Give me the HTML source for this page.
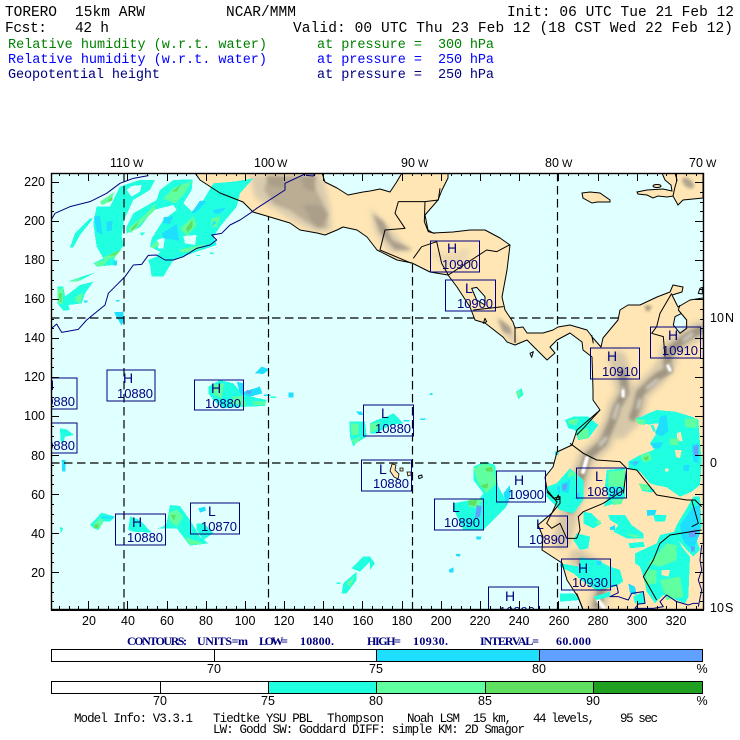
<!DOCTYPE html>
<html><head><meta charset="utf-8"><style>
html,body{margin:0;padding:0;background:#fff;width:740px;height:740px;overflow:hidden}
svg{display:block}
text{font-family:"Liberation Mono",monospace;font-size:14.5px;fill:#000;white-space:pre}
.s{font-family:"Liberation Sans",sans-serif;font-size:12.5px}
.n{font-family:"Liberation Sans",sans-serif;font-size:13px;fill:#00007f}
.b{font-family:"Liberation Serif",serif;font-weight:bold;font-size:12px;fill:#00007f}
.t{fill:#20ffdf}.g{fill:#60ff9f}.m{fill:#60e060}.d{fill:#1fa020}.c{fill:#1fdfff}.p{fill:#60a0ff}
.rain{shape-rendering:crispEdges}
.ln{fill:none;stroke-linejoin:round;vector-effect:non-scaling-stroke}
</style></head><body>
<svg width="740" height="740" viewBox="0 0 740 740" xmlns="http://www.w3.org/2000/svg">
<defs>
<clipPath id="plot"><rect x="51" y="173" width="652" height="436"/></clipPath>
<clipPath id="land"><path d="M195,173 200,180 220,193 243,202 253,212 270,217 290,223 300,230 317,233 325,235 337,230 343,227 357,230 367,237 377,250 397,260 412,263 430,272 448,275 457,287 470,307 475,320 485,323 503,337 507,342 515,345 527,340 537,350 547,360 555,353 550,347 557,340 570,333 582,342 583,350 592,357 593,390 593,400 600,410 577,430 572,445 557,452 553,467 545,477 547,490 557,502 552,513 538,525 543,537 542,550 562,563 567,580 578,597 583,610 703,610 703,298 690,300 678,307 672,295 682,292 683,287 673,285 670,292 657,297 640,305 628,305 620,310 618,320 603,338 601,347 593,338 587,330 570,325 558,327 553,330 543,333 527,333 523,327 515,328 513,322 505,310 502,297 507,270 510,245 500,238 485,230 470,230 453,232 433,233 428,230 425,215 438,200 442,190 448,178 448,173 402,173 396,183 390,192 380,189 370,191 363,192 348,195 337,188 325,182 322,173Z"/></clipPath>
<clipPath id="ocean"><path clip-rule="evenodd" d="M51,173H703V609H51Z M195,173 200,180 220,193 243,202 253,212 270,217 290,223 300,230 317,233 325,235 337,230 343,227 357,230 367,237 377,250 397,260 412,263 430,272 448,275 457,287 470,307 475,320 485,323 503,337 507,342 515,345 527,340 537,350 547,360 555,353 550,347 557,340 570,333 582,342 583,350 592,357 593,390 593,400 600,410 577,430 572,445 557,452 553,467 545,477 547,490 557,502 552,513 538,525 543,537 542,550 562,563 567,580 578,597 583,609 703,609 703,298 690,300 678,307 672,295 682,292 683,287 673,285 670,292 657,297 640,305 628,305 620,310 618,320 603,338 601,347 593,338 587,330 570,325 558,327 553,330 543,333 527,333 523,327 515,328 513,322 505,310 502,297 507,270 510,245 500,238 485,230 470,230 453,232 433,233 428,230 425,215 438,200 442,190 448,178 448,173 402,173 396,183 390,192 380,189 370,191 363,192 348,195 337,188 325,182 322,173Z"/></clipPath>
<filter id="bl" x="-30%" y="-30%" width="160%" height="160%"><feGaussianBlur stdDeviation="3"/></filter>
<filter id="bl2" x="-30%" y="-30%" width="160%" height="160%"><feGaussianBlur stdDeviation="1.5"/></filter>
<filter id="bl3" x="-30%" y="-30%" width="160%" height="160%"><feGaussianBlur stdDeviation=".8"/></filter>
</defs>

<!-- header -->
<text x="5" y="16" textLength="52" lengthAdjust="spacing">TORERO</text>
<text x="75" y="16" textLength="70" lengthAdjust="spacing">15km ARW</text>
<text x="226" y="16" textLength="70" lengthAdjust="spacing">NCAR/MMM</text>
<text x="507" y="16" textLength="227" lengthAdjust="spacing">Init: 06 UTC Tue 21 Feb 12</text>
<text x="5" y="32" textLength="42" lengthAdjust="spacing">Fcst:</text>
<text x="75" y="32" textLength="34" lengthAdjust="spacing">42 h</text>
<text x="293" y="32" textLength="440" lengthAdjust="spacing">Valid: 00 UTC Thu 23 Feb 12 (18 CST Wed 22 Feb 12)</text>
<text x="8" y="48" textLength="259" lengthAdjust="spacing" style="font-size:13.5px;fill:#008000">Relative humidity (w.r.t. water)</text>
<text x="317" y="48" textLength="105" lengthAdjust="spacing" style="font-size:13.5px;fill:#008000">at pressure =</text>
<text x="438" y="48" textLength="56" lengthAdjust="spacing" style="font-size:13.5px;fill:#008000">300 hPa</text>
<text x="8" y="63" textLength="259" lengthAdjust="spacing" style="font-size:13.5px;fill:#0000ff">Relative humidity (w.r.t. water)</text>
<text x="317" y="63" textLength="105" lengthAdjust="spacing" style="font-size:13.5px;fill:#0000ff">at pressure =</text>
<text x="438" y="63" textLength="56" lengthAdjust="spacing" style="font-size:13.5px;fill:#0000ff">250 hPa</text>
<text x="8" y="78" textLength="152" lengthAdjust="spacing" style="font-size:13.5px;fill:#00007f">Geopotential height</text>
<text x="317" y="78" textLength="105" lengthAdjust="spacing" style="font-size:13.5px;fill:#00007f">at pressure =</text>
<text x="438" y="78" textLength="56" lengthAdjust="spacing" style="font-size:13.5px;fill:#00007f">250 hPa</text>

<!-- plot -->
<rect x="51" y="173" width="652" height="436" fill="#e0ffff"/>
<g clip-path="url(#plot)">
<path d="M195,173 200,180 220,193 243,202 253,212 270,217 290,223 300,230 317,233 325,235 337,230 343,227 357,230 367,237 377,250 397,260 412,263 430,272 448,275 457,287 470,307 475,320 485,323 503,337 507,342 515,345 527,340 537,350 547,360 555,353 550,347 557,340 570,333 582,342 583,350 592,357 593,390 593,400 600,410 577,430 572,445 557,452 553,467 545,477 547,490 557,502 552,513 538,525 543,537 542,550 562,563 567,580 578,597 583,610 703,610 703,298 690,300 678,307 672,295 682,292 683,287 673,285 670,292 657,297 640,305 628,305 620,310 618,320 603,338 601,347 593,338 587,330 570,325 558,327 553,330 543,333 527,333 523,327 515,328 513,322 505,310 502,297 507,270 510,245 500,238 485,230 470,230 453,232 433,233 428,230 425,215 438,200 442,190 448,178 448,173 402,173 396,183 390,192 380,189 370,191 363,192 348,195 337,188 325,182 322,173Z" fill="#ffe6b4"/>

<!-- islands -->
<path d="M582,193 590,192 600,193 610,200 610,202 597,202 592,203 583,198Z" fill="#ffe6b4" stroke="#000" stroke-width="1"/>
<path d="M662,173 665,180 671,185 672,191 663,189 647,190 637,192 638,194 647,195 653,198 658,196 667,197 673,196 678,205 683,200 703,198 703,173Z" fill="#ffe6b4" stroke="#000" stroke-width="1"/>
<ellipse cx="657" cy="186" rx="4" ry="1.500" fill="#ffe6b4" stroke="#000"/>
<path d="M675,173 677,180 675,187 673,196" fill="none" stroke="#000"/>
<ellipse cx="688" cy="183" rx="7" ry="4" transform="rotate(40 688 183)" fill="#b0a48e" filter="url(#bl2)"/>
<!-- lakes -->
<path d="M680,313 686,319 685,330 678,333 673,325 675,316Z" fill="#e0ffff"/>
<path d="M472,288 477,287 485,297 485,305 477,300Z" fill="#e0ffff"/>

<!-- terrain -->
<g clip-path="url(#land)">
<g filter="url(#bl)" fill="#d9cbae">
<path d="M250,175 322,175 330,205 332,230 315,232 296,222 276,210 255,198Z"/>
<path d="M370,208 384,222 403,243 413,250 390,252 375,232Z"/>
<path d="M430,252 450,254 470,246 468,262 445,266Z" opacity=".5"/>
<path d="M495,316 510,328 520,345 508,340Z"/>
<path d="M684,173 703,173 703,186 690,192Z" opacity=".6"/>
</g>
<g filter="url(#bl2)" fill="#ac9f89">
<path d="M268,176 314,176 316,190 328,213 326,228 317,228 304,220 290,210 274,204 264,190Z" opacity=".7"/>
<path d="M266,176 285,176 284,188 270,186Z"/>
<path d="M300,176 316,176 314,192 304,188Z"/>
<path d="M303,205 320,205 328,215 320,228 312,222Z"/>
<path d="M373,214 384,222 392,240 405,246 412,250 395,250 380,232Z" />
<path d="M498,318 510,327 512,334 503,332Z"/>
</g>
<!-- Andes as blurred bands -->
<g fill="none" stroke-linejoin="round" stroke-linecap="round">
<g filter="url(#bl)" stroke="#d2c4a8" stroke-width="18" opacity=".9">
<path d="M700,330 687,337 670,350 667,363 657,377 640,393 637,407 633,417 620,430"/>
<path d="M618,360 623,383 625,393 617,407 613,420 603,443 587,457 582,470 577,490 570,510 562,540"/>
<path d="M578,558 593,567 603,583 597,608"/>
</g>
<g filter="url(#bl2)" stroke="#a09682" stroke-width="8">
<path d="M700,330 687,337 670,350 667,363 669,370 657,377 640,393 637,407 633,417"/>
<path d="M622,372 624,383 625,393 617,407 613,420 603,443 587,457 583,470 577,490 570,510"/>
<path d="M582,562 593,570 603,585 597,605"/>
</g>
<g filter="url(#bl2)" stroke="#d8d5cc" stroke-width="3">
<path d="M692,334 684,340 M668,365 670,371 M657,380 647,388 M640,400 638,408"/>
<path d="M623,388 624,396 M618,405 614,418 M606,438 600,445"/>
</g>
<g stroke="#fff" stroke-width="3" filter="url(#bl3)">
<path d="M668,366 670,370"/><path d="M623,391 623,396"/><path d="M587,458 583,472" stroke-width="4"/><path d="M598,600 604,608" stroke-width="4"/>
</g>
</g>
<path d="M644,306 652,306 648,312Z" fill="#8f8672" filter="url(#bl2)"/>
</g>

<!-- rain: ocean -->
<g class="rain">
<g transform="translate(0,150) scale(.33333)">
<path class="t" fill-rule="evenodd" d="M330,170 360,110 420,90 465,90 450,120 400,150 372,210 365,260 372,285 345,320 340,345 290,350 280,340 310,325 290,290 280,220 290,170ZM380,120 395,108 425,105 420,125 395,140Z"/>
<path class="t" d="M210,292 225,250 270,205 280,205 240,255 220,292Z M203,395 260,375 285,368 240,392Z M172,410 190,410 195,440 240,405 280,395 255,430 245,460 205,465 210,480 190,482 172,460Z"/>
<path class="t" fill-rule="evenodd" d="M380,230 400,190 470,150 480,120 520,90 578,88 575,120 550,160 575,185 610,150 640,100 700,95 760,85 720,130 710,170 660,230 640,260 650,285 590,305 520,330 490,380 455,380 450,345 445,330 470,320 480,305 450,290 455,265 490,210 530,180 520,165 460,180 420,232 380,250ZM550,258 590,255 585,285 555,280ZM470,270 495,262 490,295 475,295Z"/>
<path class="g" d="M300,155 345,125 330,155 305,165 Z M385,235 440,190 465,160 465,180 420,225 390,250Z M490,145 520,115 575,92 555,130 525,160Z M540,235 580,200 590,225 560,258Z M310,322 365,298 345,322 315,332Z M450,290 472,272 478,285 460,295Z M535,300 615,282 600,298 550,308Z M172,418 190,414 188,462 176,462Z M227,440 248,428 243,458 227,456Z M285,338 325,328 310,348 288,348Z M635,205 662,198 650,232 635,230Z M207,395 248,382 233,394Z"/>
<path class="m" d="M325,150 338,138 338,150 328,156Z M395,235 415,215 410,228 395,243Z M515,125 545,102 530,125Z M558,235 578,208 578,232 562,248Z M325,318 360,300 345,316Z M176,432 186,428 184,458 179,454Z"/>
<path class="c" d="M282,200 300,198 308,255 290,245Z M320,215 338,212 335,243 320,243Z M490,202 520,198 510,222 490,220Z M485,250 530,222 538,272 490,265Z M600,152 620,155 585,190 575,188Z M640,180 680,172 660,190 640,190Z M640,215 650,215 635,232Z M342,487 370,485 372,510 365,527 355,510Z M765,670 785,650 808,658 790,672Z M340,332 352,332 350,347 340,347Z M252,452 262,452 262,457 252,457Z M348,450 358,450 358,455 348,455Z"/>
<path class="t" d="M590,315 600,315 600,318 590,318Z M630,308 640,308 640,312 630,312Z M420,248 435,248 425,258Z"/>
</g>

<g transform="translate(0,380) scale(.33333)">
<path class="t" d="M625,20 660,0 700,10 730,45 800,60 795,78 740,80 670,85 640,60 625,40Z"/>
<path class="g" d="M638,15 672,10 665,55 640,42Z M700,50 730,48 740,78 695,70Z M758,65 798,65 795,75 762,75Z"/>
<path class="c" d="M710,5 730,10 732,35 780,20 787,40 750,50 720,40Z M865,38 880,38 880,52 865,52Z M792,44 812,44 812,48 792,48Z"/>
<path class="p" d="M740,30 755,33 750,43 740,40Z"/>
<path class="t" d="M812,50 828,50 828,54 812,54Z M180,145 200,148 222,165 195,170 190,190 182,185Z M180,440 190,445 182,460Z M270,435 305,398 345,410 330,425 310,425 295,450 280,445Z M390,410 420,420 455,458 400,455 385,450Z M490,440 500,430 510,375 540,378 570,420 600,470 625,490 570,497 530,445 472,445Z M590,430 610,430 640,460 610,480 590,450Z M1048,125 1095,125 1100,170 1075,185 1060,200 1050,170Z M1055,565 1090,530 1110,530 1110,545 1080,575Z M1025,640 1030,610 1070,575 1070,600 1040,640Z M1010,608 1022,608 1022,612 1010,612Z"/>
<path class="c" d="M185,240 197,240 197,275 187,275Z M595,385 615,380 618,392 600,398Z M305,410 340,410 340,415 305,415Z M1068,95 1085,95 1090,105 1078,105Z"/>
<path class="g" d="M280,435 300,415 310,420 300,445 285,447Z M505,400 530,388 550,410 530,440 510,425Z M555,470 580,480 612,490 570,495Z M1055,180 1085,168 1065,195Z M1040,610 1065,588 1050,622Z M1052,130 1075,130 1075,165 1055,165Z"/>
<path class="m" d="M282,435 295,430 295,443 285,445Z M512,405 528,405 522,422Z"/>
</g>

<g transform="translate(370,380) scale(.33333)">
<path class="t" d="M310,260 345,245 375,255 385,320 410,365 410,380 380,410 340,450 280,450 250,385 250,370 330,355 340,340 310,300Z M0,530 15,550 0,570Z M0,130 20,120 50,110 70,100 100,130 60,135 20,160 0,160Z M438,35 455,25 460,45 445,57Z"/>
<path class="g" d="M310,265 345,250 370,260 380,310 350,340 325,310Z M295,360 340,355 325,385 295,380Z M438,35 452,32 452,48 442,50Z M0,132 30,125 20,150 0,158Z"/>
<path class="m" d="M345,265 365,260 370,275 350,275Z M335,315 355,310 352,325 335,322Z M295,362 322,360 315,378 295,375Z"/>
<path class="c" d="M318,470 335,470 332,478 320,478Z M258,522 272,522 270,530 258,528Z M235,570 250,562 250,578 240,578Z M400,340 420,315 422,345 410,378Z M178,42 188,38 188,44 180,46Z M150,116 168,116 165,120 152,120Z M100,120 118,120 118,124 100,124Z M555,215 565,215 565,225 555,225Z"/>
<path class="p" d="M320,375 335,380 330,410 315,415Z"/>
<!-- Ecuador -->
<path class="t" d="M530,320 560,310 600,265 640,300 640,360 610,400 570,390 530,350Z"/>
<path class="g" d="M600,270 625,290 615,320 590,300Z"/>
<path class="c" d="M560,320 600,310 590,345 565,340Z M610,335 630,340 625,360 610,355Z"/>
</g>

<!-- rain: south america, coordinates of a 3x crop -->
<g transform="translate(560,400) scale(.33333)">
<path class="t" fill-rule="evenodd" d="M225,55 245,50 265,40 290,30 345,35 395,50 415,60 420,130 425,185 420,255 395,275 360,290 320,262 285,255 270,250 240,215 205,205 205,185 240,165 280,150 295,130 270,130 290,100 280,75 240,70ZM270,72 298,70 300,95 280,95ZM350,100 362,95 368,125 352,120ZM345,150 365,150 360,175 348,170ZM315,205 325,205 325,215 315,215Z"/>
<path class="t" d="M240,250 285,270 275,278 245,272Z M15,60 40,50 85,50 115,75 85,115 55,120 45,90 25,85Z M0,240 45,225 50,290 15,310 0,300Z M140,210 195,205 195,295 150,315 130,320 145,290 135,260Z M145,345 195,345 215,375 250,400 250,415 200,415 160,395 175,375 150,360Z M70,335 95,340 125,370 100,385 70,370Z M280,345 320,345 315,365 285,365Z M350,375 380,325 400,290 420,290 425,380 410,420 420,450 400,470 380,450 355,420 340,400Z M205,430 250,425 255,440 210,445Z M50,400 90,410 85,445 60,450 40,420Z M0,580 40,580 60,600 0,605Z M100,590 150,575 150,590 110,600Z M220,590 250,575 255,610 225,610Z M0,490 60,500 60,472 110,480 150,500 180,510 190,545 165,560 110,570 70,545 40,520 0,500Z"/>
<path class="t" fill-rule="evenodd" d="M225,460 290,430 300,405 345,395 365,440 390,470 385,590 375,610 310,585 285,610 260,575 250,530 240,500 225,490ZM305,510 330,510 325,530 305,525Z"/>
<path class="g" d="M25,60 55,55 50,75 25,72Z M55,90 85,85 85,115 55,118Z M375,55 412,55 410,85 375,80Z M330,115 355,115 355,135 330,135Z M225,55 255,60 255,75 235,72Z M240,165 270,158 275,180 250,187Z M145,215 195,210 190,260 145,260Z M235,250 270,255 270,272 245,270Z M290,465 320,430 350,435 350,480 300,500 265,490Z M260,510 290,510 290,550 255,555Z M300,540 360,530 370,590 320,600Z M195,400 245,408 225,413Z M105,365 122,360 118,375Z M155,300 190,295 185,312 160,315Z"/>
<path class="m" d="M250,172 265,168 265,180 255,182Z"/>
<path class="c" d="M300,50 320,45 325,95 305,110 285,100 295,75Z M270,130 310,125 300,145 280,145Z M205,185 240,185 225,200Z M370,195 390,195 385,215 370,212Z M260,330 290,330 285,345 262,348Z M150,382 165,375 165,390 150,390Z M360,375 400,320 420,315 420,400 400,450 375,430 365,410Z M395,135 415,130 415,190 400,185Z M205,550 225,560 230,585 210,580Z M5,250 30,240 25,280 5,275Z M110,482 125,482 125,495 110,495Z"/>
<path class="p" d="M400,140 415,135 415,165 402,165Z M385,395 410,385 408,410 388,412Z M392,440 405,440 403,455 393,455Z M220,185 232,185 228,192Z M8,255 22,250 18,270 8,270Z"/>
</g>
</g>

<!-- dashed grid: only over ocean -->
<g clip-path="url(#ocean)">
<g stroke="#000" stroke-width="1.200" stroke-dasharray="8.5,4.5" fill="none">
<path d="M124,173V609M268.500,173V609M412.500,173V609M557.500,173V609"/>
<path d="M51,318H703M51,463H703"/>
</g>
</g>

<!-- contour lines and boundaries -->
<g transform="translate(0,150) scale(.33333)" stroke="#00007f" stroke-width="1">
<path class="ln" d="M155,207 165,190 210,170 270,155 320,130 360,100 400,85 445,77"/>
<path class="ln" d="M155,535 170,522 185,547 235,538 260,510 315,465 325,430 355,400 375,380 400,345 425,343 445,316 470,315 495,330 520,330 550,320 590,295 630,285 650,270 635,255 665,250 690,225 720,210 750,190 770,175 855,120 855,100 915,72 945,72 940,78 918,76"/>
</g>
<g transform="translate(560,400) scale(.33333)" stroke="#00007f" stroke-width="1">
<path class="ln" d="M425,435 420,480 425,510 415,540 425,570 415,620"/>
<path class="ln" d="M150,560 170,555 175,578 150,590 175,590 205,600 215,580 250,575 255,610 235,612 225,625 280,625 310,620 300,605 320,585 350,605 385,615 400,610 415,610"/>
</g>
<g stroke="#000" stroke-width="1">
<path class="ln" d="M195,173 200,180 220,193 243,202 253,212 270,217 290,223 300,230 317,233 325,235 337,230 343,227 357,230 367,237 377,250 397,260 412,263 430,272 448,275 457,287 470,307 475,320 485,323 503,337 507,342 515,345 527,340 537,350 547,360 555,353 550,347 557,340 570,333 582,342 583,350 592,357 593,390 593,400 600,410 577,430 572,445 557,452 553,467 545,477 547,490 557,502 552,513 538,525 543,537 542,550 562,563 567,580 578,597 583,610"/>
<path class="ln" d="M703,298 690,300 678,307 672,295 682,292 683,287 673,285 670,292 657,297 640,305 628,305 620,310 618,320 603,338 601,347 593,338 587,330 570,325 558,327 553,330 543,333 527,333 523,327 515,328 513,322 505,310 502,297 507,270 510,245 500,238 485,230 470,230 453,232 433,233 428,230 425,215 438,200 442,190 448,178 448,173"/>
<path class="ln" d="M402,173 396,183 390,192 380,189 370,191 363,192 348,195 337,188 325,182 322,173"/>
</g>
<g transform="translate(370,150) scale(.33333)" stroke="#000" stroke-width="1">
<path class="ln" d="M85,155 165,155 163,215 175,245 195,250"/>
<path class="ln" d="M85,155 75,190 105,235 45,240 30,300 125,340"/>
<path class="ln" d="M165,155 205,150 210,115"/>
<path class="ln" d="M155,290 130,325 M155,290 200,275 215,340 235,375 350,300 380,305 418,285"/>
<path class="ln" d="M310,480 400,470"/>
<path class="ln" d="M435,530 435,578"/>
<path class="ln" d="M305,415 320,412 345,440 345,465 320,450Z"/>
<path class="ln" d="M665,555 670,580"/>
<path class="ln" d="M905,430 870,490 860,530 845,550 880,560 885,620"/>
<path class="ln" d="M930,465 925,480 950,510 950,535 930,550 910,525 915,500 935,490"/>
<path class="ln" d="M480,610 490,605 485,622Z"/>
<path class="ln" d="M990,415 997,412 997,432 985,430Z"/>
<path class="ln" d="M345,505 350,515 340,520Z"/>
</g>
<g transform="translate(370,380) scale(.33333)" stroke="#000" stroke-width="1">
<path class="ln" d="M600,190 640,220 680,240 750,245 770,265 800,270 860,345 950,360 975,360 995,380"/>
<path class="ln" d="M620,165 640,145 690,90"/>
<path class="ln" d="M770,265 760,340"/>
<path class="ln" d="M530,335 550,355 570,350 570,370 545,400 530,430 545,445 570,430 590,475 620,475 630,450 625,410 640,395 700,370 760,330"/>
<path class="ln" d="M995,450 900,465 870,490 850,540 820,590 860,660"/>
<path class="ln" d="M965,360 985,430 965,440"/>
<path class="ln" d="M565,345 558,358 568,358Z"/>
<path class="ln" d="M620,640 640,690"/>
<path class="ln" d="M145,288 155,285 157,292 147,296Z"/>
</g>
<!-- galapagos -->
<g fill="#ffe6b4" stroke="#000" stroke-width=".8">
<path d="M390,471 392,464 396,465 395,470 399,474 398,479 394,477Z"/>
<path d="M400,468 403,468 403,471 400,471Z"/>
<path d="M407,472 411,472 411,475 408,476Z"/>
</g>

<!-- label boxes -->
<g fill="none" stroke="#00007f" stroke-width="1.200" shape-rendering="crispEdges">
<rect x="27" y="378" width="50" height="31"/><rect x="27" y="423" width="50" height="30"/>
<rect x="107" y="370" width="48" height="31"/><rect x="194.500" y="380" width="49" height="30"/>
<rect x="363.500" y="405" width="50" height="31"/><rect x="361.500" y="460" width="50" height="31"/>
<rect x="115.500" y="514" width="50" height="31"/><rect x="190.500" y="503" width="49" height="31"/>
<rect x="430.500" y="241" width="49" height="31"/><rect x="445.500" y="280" width="50" height="31"/>
<rect x="590.500" y="348" width="49" height="31"/><rect x="650.500" y="327" width="50" height="31"/>
<rect x="496.500" y="471" width="49" height="31"/><rect x="434.500" y="499" width="49" height="31"/>
<rect x="518.500" y="516" width="49" height="31"/><rect x="576.500" y="468" width="50" height="30"/>
<rect x="561.500" y="559" width="49" height="31"/><rect x="488.500" y="587" width="50" height="31"/>
</g>
<text class="n" x="44" y="390" style="font-size:14px">H</text><text class="n" x="39" y="406" textLength="36">10880</text>
<text class="n" x="44" y="435" style="font-size:14px">L</text><text class="n" x="39" y="450" textLength="36">10880</text>
<text class="n" x="123" y="383" style="font-size:14px">H</text><text class="n" x="117" y="398" textLength="36">10880</text>
<text class="n" x="211" y="393" style="font-size:14px">H</text><text class="n" x="205" y="408" textLength="36">10880</text>
<text class="n" x="381" y="418" style="font-size:14px">L</text><text class="n" x="375" y="433" textLength="36">10880</text>
<text class="n" x="379" y="474" style="font-size:14px">L</text><text class="n" x="373" y="488" textLength="36">10880</text>
<text class="n" x="132" y="527" style="font-size:14px">H</text><text class="n" x="127" y="542" textLength="36">10880</text>
<text class="n" x="208" y="516" style="font-size:14px">L</text><text class="n" x="201" y="531" textLength="36">10870</text>
<text class="n" x="447" y="253" style="font-size:14px">H</text><text class="n" x="442" y="269" textLength="36">10900</text>
<text class="n" x="465" y="293" style="font-size:14px">L</text><text class="n" x="457" y="308" textLength="36">10900</text>
<text class="n" x="607" y="361" style="font-size:14px">H</text><text class="n" x="602" y="376" textLength="36">10910</text>
<text class="n" x="668" y="340" style="font-size:14px">H</text><text class="n" x="662" y="355" textLength="36">10910</text>
<text class="n" x="514" y="485" style="font-size:14px">H</text><text class="n" x="508" y="499" textLength="36">10900</text>
<text class="n" x="452" y="512" style="font-size:14px">L</text><text class="n" x="444" y="527" textLength="36">10890</text>
<text class="n" x="536" y="529" style="font-size:14px">L</text><text class="n" x="529" y="544" textLength="36">10890</text>
<text class="n" x="595" y="481" style="font-size:14px">L</text><text class="n" x="587" y="496" textLength="36">10890</text>
<text class="n" x="578" y="573" style="font-size:14px">H</text><text class="n" x="572" y="587" textLength="36">10930</text>
<text class="n" x="505" y="601" style="font-size:14px">H</text><text class="n" x="499" y="616" textLength="36">10890</text>
</g>

<!-- frame and ticks -->
<rect x="51.500" y="173.500" width="652" height="436" fill="none" stroke="#000" stroke-width="1.400"/>
<path d="M51,610H704" stroke="#000" stroke-width="2"/>
<path stroke="#000" stroke-width="1" fill="none" shape-rendering="crispEdges" d="
M51,182.500h8M51,221.500h8M51,260.500h8M51,299.500h8M51,338.500h8M51,377.500h8M51,416.500h8M51,455.500h8M51,494.500h8M51,533.500h8M51,572.500h8
M51,192.500h3M51,202.500h3M51,211.500h3M51,231.500h3M51,241.500h3M51,250.500h3M51,270.500h3M51,280.500h3M51,289.500h3M51,309.500h3M51,319.500h3M51,328.500h3M51,348.500h3M51,358.500h3M51,367.500h3M51,387.500h3M51,397.500h3M51,406.500h3M51,426.500h3M51,436.500h3M51,445.500h3M51,465.500h3M51,475.500h3M51,484.500h3M51,504.500h3M51,514.500h3M51,523.500h3M51,543.500h3M51,553.500h3M51,562.500h3M51,582.500h3M51,592.500h3M51,601.500h3
M703,182.500h-8M703,221.500h-8M703,260.500h-8M703,299.500h-8M703,338.500h-8M703,377.500h-8M703,416.500h-8M703,455.500h-8M703,494.500h-8M703,533.500h-8M703,572.500h-8
M703,192.500h-3M703,202.500h-3M703,211.500h-3M703,231.500h-3M703,241.500h-3M703,250.500h-3M703,270.500h-3M703,280.500h-3M703,289.500h-3M703,309.500h-3M703,319.500h-3M703,328.500h-3M703,348.500h-3M703,358.500h-3M703,367.500h-3M703,387.500h-3M703,397.500h-3M703,406.500h-3M703,426.500h-3M703,436.500h-3M703,445.500h-3M703,465.500h-3M703,475.500h-3M703,484.500h-3M703,504.500h-3M703,514.500h-3M703,523.500h-3M703,543.500h-3M703,553.500h-3M703,562.500h-3M703,582.500h-3M703,592.500h-3M703,601.500h-3
M88.500,609v-8M127.500,609v-8M167.500,609v-8M206.500,609v-8M245.500,609v-8M284.500,609v-8M323.500,609v-8M362.500,609v-8M402.500,609v-8M441.500,609v-8M480.500,609v-8M519.500,609v-8M558.500,609v-8M598.500,609v-8M637.500,609v-8M676.500,609v-8
M59.500,609v-3M69.500,609v-3M78.500,609v-3M98.500,609v-3M108.500,609v-3M118.500,609v-3M137.500,609v-3M147.500,609v-3M157.500,609v-3M177.500,609v-3M186.500,609v-3M196.500,609v-3M216.500,609v-3M226.500,609v-3M236.500,609v-3M255.500,609v-3M265.500,609v-3M275.500,609v-3M294.500,609v-3M304.500,609v-3M314.500,609v-3M333.500,609v-3M343.500,609v-3M353.500,609v-3M372.500,609v-3M382.500,609v-3M392.500,609v-3M412.500,609v-3M421.500,609v-3M431.500,609v-3M451.500,609v-3M461.500,609v-3M470.500,609v-3M490.500,609v-3M500.500,609v-3M510.500,609v-3M529.500,609v-3M539.500,609v-3M549.500,609v-3M568.500,609v-3M578.500,609v-3M588.500,609v-3M608.500,609v-3M618.500,609v-3M627.500,609v-3M647.500,609v-3M657.500,609v-3M666.500,609v-3M686.500,609v-3M696.500,609v-3
M88.500,173v8M127.500,173v8M167.500,173v8M206.500,173v8M245.500,173v8M284.500,173v8M323.500,173v8M362.500,173v8M402.500,173v8M441.500,173v8M480.500,173v8M519.500,173v8M558.500,173v8M598.500,173v8M637.500,173v8M676.500,173v8
M59.500,173v3M69.500,173v3M78.500,173v3M98.500,173v3M108.500,173v3M118.500,173v3M137.500,173v3M147.500,173v3M157.500,173v3M177.500,173v3M186.500,173v3M196.500,173v3M216.500,173v3M226.500,173v3M236.500,173v3M255.500,173v3M265.500,173v3M275.500,173v3M294.500,173v3M304.500,173v3M314.500,173v3M333.500,173v3M343.500,173v3M353.500,173v3M372.500,173v3M382.500,173v3M392.500,173v3M412.500,173v3M421.500,173v3M431.500,173v3M451.500,173v3M461.500,173v3M470.500,173v3M490.500,173v3M500.500,173v3M510.500,173v3M529.500,173v3M539.500,173v3M549.500,173v3M568.500,173v3M578.500,173v3M588.500,173v3M608.500,173v3M618.500,173v3M627.500,173v3M647.500,173v3M657.500,173v3M666.500,173v3M686.500,173v3M696.500,173v3"/>

<!-- axis labels -->
<g text-anchor="end">
<text class="s" x="45" y="186">220</text><text class="s" x="45" y="225">200</text><text class="s" x="45" y="264">180</text><text class="s" x="45" y="303">160</text><text class="s" x="45" y="342">140</text><text class="s" x="45" y="381">120</text><text class="s" x="45" y="420">100</text><text class="s" x="45" y="460">80</text><text class="s" x="45" y="499">60</text><text class="s" x="45" y="538">40</text><text class="s" x="45" y="577">20</text>
</g>
<g text-anchor="middle">
<text class="s" x="89" y="625">20</text><text class="s" x="128" y="625">40</text><text class="s" x="167" y="625">60</text><text class="s" x="206" y="625">80</text><text class="s" x="245" y="625">100</text><text class="s" x="284" y="625">120</text><text class="s" x="323" y="625">140</text><text class="s" x="363" y="625">160</text><text class="s" x="402" y="625">180</text><text class="s" x="441" y="625">200</text><text class="s" x="480" y="625">220</text><text class="s" x="519" y="625">240</text><text class="s" x="559" y="625">260</text><text class="s" x="598" y="625">280</text><text class="s" x="637" y="625">300</text><text class="s" x="676" y="625">320</text>
</g>
<text class="s" x="110" y="167">110</text><text class="s" x="133" y="167" style="font-size:11px">W</text>
<text class="s" x="254" y="167">100</text><text class="s" x="277" y="167" style="font-size:11px">W</text>
<text class="s" x="401" y="167">90</text><text class="s" x="418" y="167" style="font-size:11px">W</text>
<text class="s" x="545" y="167">80</text><text class="s" x="562" y="167" style="font-size:11px">W</text>
<text class="s" x="689" y="167">70</text><text class="s" x="706" y="167" style="font-size:11px">W</text>
<text class="s" x="710" y="322">10</text><text class="s" x="725" y="322">N</text>
<text class="s" x="710" y="467">0</text>
<text class="s" x="710" y="612">10</text><text class="s" x="725" y="612">S</text>

<!-- contour line text -->
<text class="b" x="127" y="645" textLength="60">CONTOURS:</text>
<text class="b" x="197" y="645" textLength="51">UNITS=m</text>
<text class="b" x="259" y="645" textLength="29">LOW=</text>
<text class="b" x="300" y="645" textLength="34">10800.</text>
<text class="b" x="367" y="645" textLength="34">HIGH=</text>
<text class="b" x="413" y="645" textLength="35">10930.</text>
<text class="b" x="480" y="645" textLength="59">INTERVAL=</text>
<text class="b" x="556" y="645" textLength="35">60.000</text>

<!-- colorbars -->
<g stroke="#000" stroke-width="1.300" shape-rendering="crispEdges">
<rect x="51.500" y="649.500" width="325" height="12" fill="#fff"/>
<rect x="376.500" y="649.500" width="163" height="12" fill="#1fdfff"/>
<rect x="539.500" y="649.500" width="163" height="12" fill="#60a0ff"/>
<path d="M214.500,650v11"/>
<rect x="51.500" y="681.500" width="217" height="12" fill="#fff"/>
<rect x="268.500" y="681.500" width="108" height="12" fill="#20ffdf"/>
<rect x="376.500" y="681.500" width="109" height="12" fill="#60ff9f"/>
<rect x="485.500" y="681.500" width="108" height="12" fill="#60e060"/>
<rect x="593.500" y="681.500" width="109" height="12" fill="#1fa020"/>
<path d="M160.500,682v11"/>
</g>
<g text-anchor="middle">
<text class="s" x="214" y="673">70</text><text class="s" x="376" y="673">75</text><text class="s" x="539" y="673">80</text><text class="s" x="702" y="673">%</text>
<text class="s" x="160" y="705">70</text><text class="s" x="268" y="705">75</text><text class="s" x="376" y="705">80</text><text class="s" x="485" y="705">85</text><text class="s" x="593" y="705">90</text><text class="s" x="702" y="705">%</text>
</g>

<!-- footer -->
<g style="font-size:12.5px">
<text x="74" y="722" textLength="119" lengthAdjust="spacing" style="font-size:12.5px">Model Info: V3.3.1</text>
<text x="213" y="722" textLength="100" lengthAdjust="spacing" style="font-size:12.5px">Tiedtke YSU PBL</text>
<text x="327" y="722" textLength="57" lengthAdjust="spacing" style="font-size:12.5px">Thompson</text>
<text x="407" y="722" textLength="53" lengthAdjust="spacing" style="font-size:12.5px">Noah LSM</text>
<text x="473" y="722" textLength="39" lengthAdjust="spacing" style="font-size:12.5px">15 km,</text>
<text x="533" y="722" textLength="62" lengthAdjust="spacing" style="font-size:12.5px">44 levels,</text>
<text x="620" y="722" textLength="38" lengthAdjust="spacing" style="font-size:12.5px">95 sec</text>
</g>
<text x="213" y="733" textLength="312" lengthAdjust="spacing" style="font-size:12.5px">LW: Godd SW: Goddard DIFF: simple KM: 2D Smagor</text>
</svg>
</body></html>
